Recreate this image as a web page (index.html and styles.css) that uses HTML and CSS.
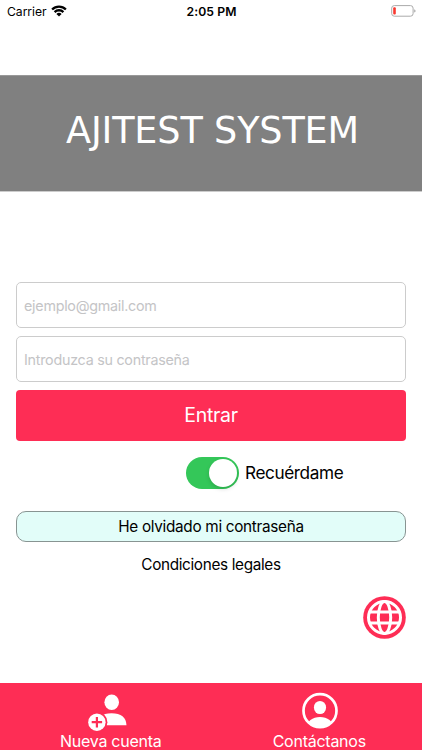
FILE: index.html
```html
<!DOCTYPE html>
<html lang="es">
<head>
    <meta charset="UTF-8">
    <meta name="viewport" content="width=device-width, initial-scale=1.0">
    <title>Ajitest System</title>
    <link rel="stylesheet" href="styles.css">
</head>
<body>

<div class="screen">
    <div class="status-bar">
        <div class="carrier">
            <span>Carrier</span>
            <svg class="wifi" width="16" height="12" viewBox="0 0 16 12">
                <path d="M1.1 4.5a9.8 9.8 0 0 1 13.8 0M3.6 7.1a6.2 6.2 0 0 1 8.8 0" fill="none" stroke="#000" stroke-width="2.3"/>
                <path d="M8 11.6L5.4 9a3.7 3.7 0 0 1 5.2 0z"/>
            </svg>
        </div>
        <span class="time">2:05 PM</span>
        <svg class="battery" width="25" height="12" viewBox="0 0 25 12">
            <rect x=".7" y=".6" width="21.4" height="10.6" rx="2.6" fill="#fff" stroke="#aaa"/>
            <rect x="2.2" y="2.2" width="2.6" height="7.4" rx="1" fill="#f9382f"/>
            <path d="M23.3 4.2q1.2.6 1.2 1.7t-1.2 1.7z" fill="#999"/>
        </svg>
    </div>

    <div class="banner">
        <h1>AJITEST SYSTEM</h1>
    </div>

    <form class="login">
        <input type="email" name="email" placeholder="ejemplo@gmail.com">
        <input type="password" name="password" placeholder="Introduzca su contraseña">
        <button type="submit" class="enter">Entrar</button>
        <label class="remember">
            <span class="switch"><span class="knob"></span></span>
            <span class="remember-text">Recuérdame</span>
        </label>
        <button type="button" class="forgot">He olvidado mi contraseña</button>
        <a class="legal">Condiciones legales</a>
    </form>

    <div class="language">
        <svg width="43" height="43" viewBox="0 0 43 43">
            <circle cx="21.5" cy="21.5" r="21.3" fill="#fe2d55"/>
            <g fill="none" stroke="#fff" stroke-width="3">
                <circle cx="21.5" cy="21.5" r="16"/>
                <ellipse cx="21.5" cy="21.5" rx="6.2" ry="16"/>
                <path d="M6.5 15.9h30M6.5 27.1h30"/>
            </g>
        </svg>
    </div>

    <div class="tab-bar">
        <a class="tab new-account">
            <svg width="42" height="39" viewBox="0 0 42 39">
                <ellipse cx="23.7" cy="10.3" rx="7.3" ry="7.8" fill="#fff"/>
                <path d="M9 33.2q0-12 14.5-12t15 12z" fill="#fff"/>
                <circle cx="8.9" cy="30.2" r="10.5" fill="#fe2d55"/>
                <circle cx="8.9" cy="30.2" r="8.7" fill="#fff"/>
                <path d="M8.9 25v10.4M3.7 30.2h10.4" stroke="#fe2d55" stroke-width="2.2"/>
            </svg>
            <span>Nueva cuenta</span>
        </a>
        <a class="tab contact">
            <svg width="36" height="39" viewBox="0 0 36 39">
                <clipPath id="face"><circle cx="18" cy="18.7" r="16.5"/></clipPath>
                <circle cx="18" cy="18.7" r="16.5" fill="none" stroke="#fff" stroke-width="2.7"/>
                <ellipse cx="18" cy="15.5" rx="6.1" ry="6.6" fill="#fff"/>
                <ellipse cx="18" cy="35.5" rx="13.5" ry="10.6" fill="#fff" clip-path="url(#face)"/>
            </svg>
            <span>Contáctanos</span>
        </a>
    </div>
</div>

</body>
</html>
```

FILE: styles.css
```css
* {
    box-sizing: border-box;
}

body {
    margin: 0;
    background-color: #fff;
    color: #000;
    font-family: Inter, "Liberation Sans", sans-serif;
}

.screen {
    display: flex;
    flex-direction: column;
    height: 750px;
    overflow: hidden;
}

.status-bar {
    display: grid;
    grid-template-columns: 1fr auto 1fr;
    align-items: center;
    height: 22px;
    padding: 0 6px 0 7px;
    font-size: 12.2px;
}

.carrier {
    display: flex;
    align-items: center;
    gap: 4px;
    letter-spacing: -0.05px;
}

.time {
    font-weight: 600;
    letter-spacing: 0.1px;
}

.battery {
    justify-self: end;
}

.banner {
    height: 117px;
    margin-top: 53px;
    padding: 33px 0 0 3px;
    background-color: #808080;
    border-top: 1px solid #999;
    border-bottom: 1px solid #ccc;
}

.banner h1 {
    margin: 0;
    color: #fff;
    font-family: "DejaVu Sans", sans-serif;
    font-size: 36.6px;
    font-weight: normal;
    letter-spacing: -0.15px;
    line-height: 43px;
    text-align: center;
    white-space: nowrap;
}

.login {
    display: flex;
    flex-direction: column;
    margin-top: 90px;
    padding: 0 16px;
}

.login input {
    height: 46px;
    margin: 0 0 8px;
    padding: 0 7px;
    border: 1px solid #ccc;
    border-radius: 5px;
    background-color: #fff;
    font-family: inherit;
    font-size: 14.3px;
    letter-spacing: -0.25px;
}

.login input::placeholder {
    color: #c4c4c6;
}

.enter {
    height: 51px;
    padding: 0 0 2px;
    border: none;
    border-radius: 4px;
    background-color: #fe2d55;
    color: #fff;
    font-family: inherit;
    font-size: 19.5px;
    letter-spacing: -0.3px;
}

.remember {
    display: flex;
    align-items: center;
    gap: 6px;
    height: 32px;
    margin: 16px 0 22px 170px;
    font-size: 17.2px;
    letter-spacing: -0.4px;
}

.remember-text {
    padding-bottom: 1px;
}

.switch {
    display: flex;
    justify-content: flex-end;
    width: 53px;
    height: 32px;
    padding: 2px;
    border-radius: 16px;
    background-color: #34c759;
}

.knob {
    width: 28px;
    height: 28px;
    border-radius: 50%;
    background-color: #fff;
    box-shadow: 0 2px 4px rgba(0, 0, 0, 0.15);
}

.forgot {
    height: 31px;
    padding: 0;
    border: 1px solid #889492;
    border-radius: 10px;
    background-color: #e2fdf9;
    color: #000;
    font-family: inherit;
    font-size: 15.3px;
    letter-spacing: -0.3px;
}

.legal {
    margin-top: 13px;
    font-size: 15.3px;
    letter-spacing: -0.33px;
    line-height: 20px;
    text-align: center;
}

.language {
    display: flex;
    justify-content: flex-end;
    margin-top: 21px;
    padding-right: 16px;
}

.language svg {
    display: block;
}

.tab-bar {
    display: flex;
    height: 67px;
    margin-top: auto;
    padding-top: 9px;
    background-color: #fe2d55;
    color: #fff;
}

.tab {
    display: flex;
    flex: 1;
    flex-direction: column;
    align-items: center;
    font-size: 16px;
    letter-spacing: -0.25px;
    line-height: 20px;
}

.new-account {
    padding-left: 8px;
}

.new-account svg {
    margin-right: 4px;
}

.contact {
    padding-left: 3px;
}

.contact svg {
    margin-left: 2px;
}

.tab svg {
    flex: none;
}
```
